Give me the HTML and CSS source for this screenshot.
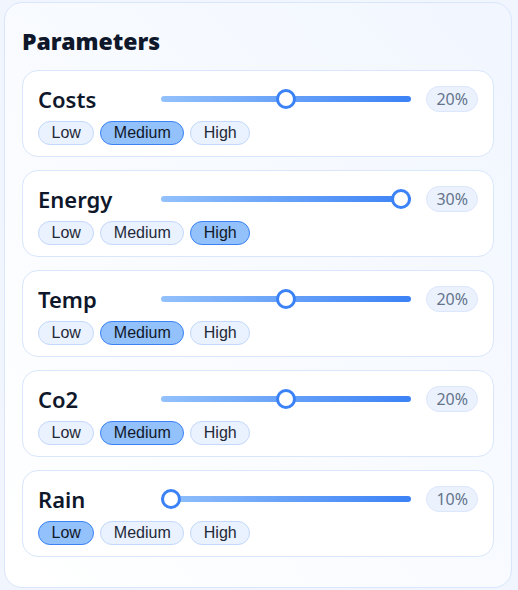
FILE: index.html
```html
<!DOCTYPE html>
<html lang="en">
<head>
    <meta charset="UTF-8">
    <title>Parameters</title>
    <link rel="stylesheet" href="styles.css">
</head>
<body>
<!--参数面板-->
<div class="panel">
    <h2 class="panel-title">Parameters</h2>
    <div class="param-list">
        <!--Costs-->
        <div class="param">
            <div class="param-row">
                <span class="param-name">Costs</span>
                <input class="param-range" type="range" min="10" max="30" step="10" value="20">
                <span class="param-value">20%</span>
            </div>
            <div class="chips">
                <span class="chip">Low</span>
                <span class="chip active">Medium</span>
                <span class="chip">High</span>
            </div>
        </div>
        <!--Energy-->
        <div class="param">
            <div class="param-row">
                <span class="param-name">Energy</span>
                <input class="param-range" type="range" min="10" max="30" step="10" value="30">
                <span class="param-value">30%</span>
            </div>
            <div class="chips">
                <span class="chip">Low</span>
                <span class="chip">Medium</span>
                <span class="chip active">High</span>
            </div>
        </div>
        <!--Temp-->
        <div class="param">
            <div class="param-row">
                <span class="param-name">Temp</span>
                <input class="param-range" type="range" min="10" max="30" step="10" value="20">
                <span class="param-value">20%</span>
            </div>
            <div class="chips">
                <span class="chip">Low</span>
                <span class="chip active">Medium</span>
                <span class="chip">High</span>
            </div>
        </div>
        <!--Co2-->
        <div class="param">
            <div class="param-row">
                <span class="param-name">Co2</span>
                <input class="param-range" type="range" min="10" max="30" step="10" value="20">
                <span class="param-value">20%</span>
            </div>
            <div class="chips">
                <span class="chip">Low</span>
                <span class="chip active">Medium</span>
                <span class="chip">High</span>
            </div>
        </div>
        <!--Rain-->
        <div class="param">
            <div class="param-row">
                <span class="param-name">Rain</span>
                <input class="param-range" type="range" min="10" max="30" step="10" value="10">
                <span class="param-value">10%</span>
            </div>
            <div class="chips">
                <span class="chip active">Low</span>
                <span class="chip">Medium</span>
                <span class="chip">High</span>
            </div>
        </div>
    </div>
</div>
</body>
</html>
```

FILE: styles.css
```css
* {
    margin: 0;
    padding: 0;
    box-sizing: border-box;
}
body {
    background-color: #f1f6fe;
    padding: 2px 6px 2px 4px;
    font-family: "Noto Sans", "Liberation Sans", sans-serif;
    color: #0f172a;
}
.panel {
    height: 586px;
    border: 1px solid #d9e6fb;
    border-radius: 18px;
    background: linear-gradient(to bottom left, #f1f6ff, #ffffff);
    padding: 23px 17px 30px;
}
.panel-title {
    font-size: 23px;
    font-weight: 900;
    line-height: 30px;
    color: #0f172a;
    margin-bottom: 14px;
}
.param-list {
    display: flex;
    flex-direction: column;
    gap: 13px;
}
.param {
    background-color: #fff;
    border: 1px solid #d9e6fb;
    border-radius: 16px;
    padding: 14px 15px 11px;
}
.param-row {
    display: flex;
    align-items: center;
    height: 28px;
}
.param-name {
    width: 123px;
    font-size: 22px;
    font-weight: 600;
    line-height: 28px;
}
.param-range {
    -webkit-appearance: none;
    appearance: none;
    width: 251px;
    height: 20px;
    background: transparent;
    margin-right: 15px;
    outline: none;
}
.param-range::-webkit-slider-runnable-track {
    height: 6px;
    border-radius: 3px;
    background: linear-gradient(90deg, #93c1fb, #3b82f6);
}
.param-range::-webkit-slider-thumb {
    -webkit-appearance: none;
    width: 20px;
    height: 20px;
    border-radius: 50%;
    background: #fff;
    border: 3px solid #3b82f6;
    margin-top: -7px;
}
.param-value {
    margin-left: auto;
    height: 26px;
    line-height: 24px;
    padding: 0 9px;
    border: 1px solid #dbe7fb;
    border-radius: 13px;
    background-color: #ebf2fe;
    font-size: 16px;
    color: #64748b;
}
.chips {
    display: flex;
    gap: 6px;
    margin-top: 8px;
}
.chip {
    height: 24px;
    line-height: 22px;
    padding: 0 12.5px;
    border: 1px solid #c3d8fb;
    border-radius: 12px;
    background-color: #eaf2ff;
    font-family: "Liberation Sans", Arial, sans-serif;
    font-size: 16px;
    color: #1f2937;
}
.chip.active {
    background-color: #93c1fb;
    border-color: #3b82f6;
    color: #111827;
}
```
